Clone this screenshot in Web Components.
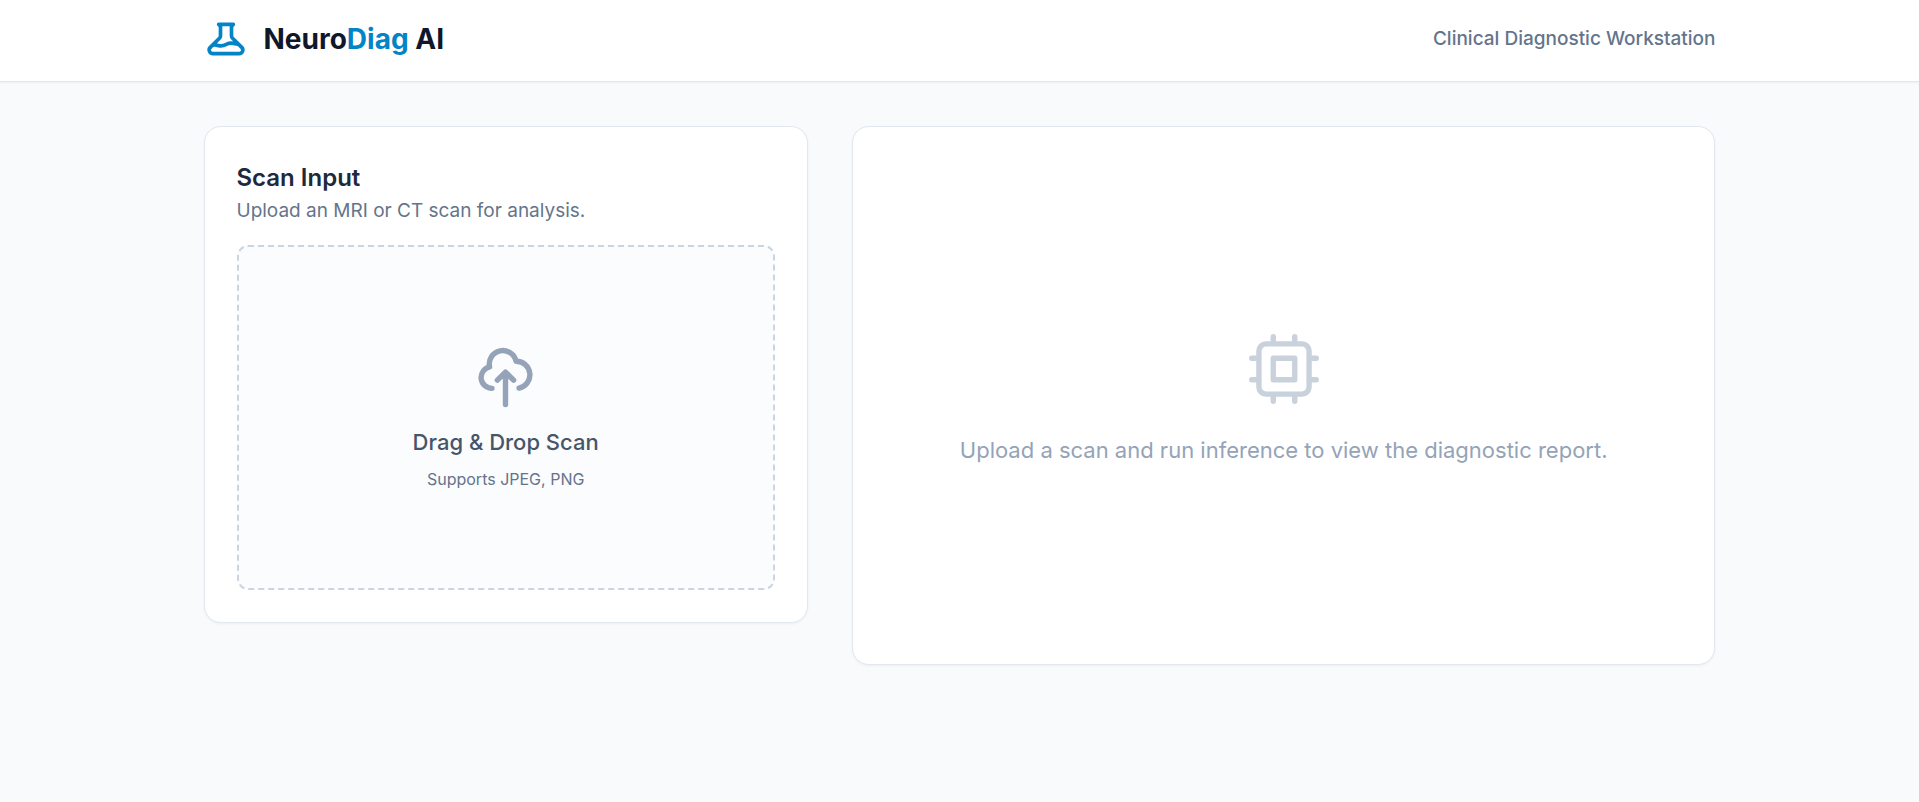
<!DOCTYPE html>
<html lang="en">
<head>
<meta charset="utf-8">
<meta name="viewport" content="width=device-width, initial-scale=1">
<title>NeuroDiag AI</title>
<style>
  :root {
    --brand: #0284c7;
    --slate-50: #f8fafc;
    --slate-200: #e2e8f0;
    --slate-300: #cbd5e1;
    --slate-400: #94a3b8;
    --slate-500: #64748b;
    --slate-600: #475569;
    --slate-800: #1e293b;
    --slate-900: #0f172a;
    --page-width: 1600px;
    --gutter: 44px;
  }
  body {
    margin: 0;
    min-height: 100vh;
    background: var(--slate-50);
    color: var(--slate-800);
    font-family: Inter, "Liberation Sans", sans-serif;
  }
</style>
</head>
<body>
<app-header>
  Neuro<span>Diag</span> AI
  <span slot="tagline">Clinical Diagnostic Workstation</span>
</app-header>
<app-workspace>
  <panel-card>
    <h2 slot="title">Scan Input</h2>
    <p slot="subtitle">Upload an MRI or CT scan for analysis.</p>
    <scan-dropzone>
      Drag &amp; Drop Scan
      <span slot="hint">Supports JPEG, PNG</span>
    </scan-dropzone>
  </panel-card>
  <panel-card>
    <empty-report>Upload a scan and run inference to view the diagnostic report.</empty-report>
  </panel-card>
</app-workspace>

<script>
const icons = {
  beaker: "M19.428 15.428a2 2 0 00-1.022-.547l-2.387-.477a6 6 0 00-3.86.517l-.318.158a6 6 0 01-3.86.517L6.05 15.21a2 2 0 00-1.806.547M8 4h8l-1 1v5.172a2 2 0 00.586 1.414l5 5c1.26 1.26.367 3.414-1.415 3.414H4.828c-1.782 0-2.674-2.154-1.414-3.414l5-5A2 2 0 009 10.172V5L8 4z",
  upload: "M7 16a4 4 0 01-.88-7.903A5 5 0 1115.9 6L16 6a5 5 0 011 9.9M15 13l-3-3m0 0l-3 3m3-3v12",
  chip: "M9 3v2m6-2v2M9 19v2m6-2v2M5 9H3m2 6H3m18-6h-2m2 6h-2M7 19h10a2 2 0 002-2V7a2 2 0 00-2-2H7a2 2 0 00-2 2v10a2 2 0 002 2zM9 9h6v6H9V9z"
}

class LineIcon extends HTMLElement {
  constructor() {
    super();
    this.attachShadow({ mode: 'open' });
  }

  connectedCallback() {
    const stroke = this.getAttribute("stroke") || 2
    this.shadowRoot.innerHTML = `
      <style>
        :host { display: block; flex: none; }
        svg { display: block; width: 100%; height: 100%; }
      </style>
      <svg viewBox="0 0 24 24" fill="none" stroke="currentColor" stroke-width="${stroke}" stroke-linecap="round" stroke-linejoin="round" aria-hidden="true"><path d="${icons[this.getAttribute("name")]}"/></svg>
    `;
  }
}
customElements.define("line-icon", LineIcon);

class AppHeader extends HTMLElement {
  constructor() {
    super();
    this.attachShadow({ mode: 'open' }).innerHTML = `
      <style>
        :host {
          display: block;
          position: relative;
          background: white;
          border-bottom: 1px solid var(--slate-200);
          box-shadow: 0 1px 2px rgba(0, 0, 0, 0.05);
        }
        header {
          box-sizing: border-box;
          max-width: var(--page-width);
          margin: 0 auto;
          padding: 17px var(--gutter) 20px;
          display: flex;
          align-items: center;
          justify-content: space-between;
          gap: 16px;
        }
        .brand {
          display: flex;
          align-items: center;
          gap: 16px;
        }
        line-icon {
          width: 44px;
          height: 44px;
          color: var(--brand);
        }
        h1 {
          margin: 0;
          color: var(--slate-900);
          font-size: 28px;
          font-weight: 700;
          line-height: 40px;
        }
        ::slotted(span:not([slot])) { color: var(--brand); }
        .tagline {
          color: var(--slate-500);
          font-size: 19px;
          font-weight: 500;
          line-height: 28px;
        }
      </style>
      <header>
        <div class="brand">
          <line-icon name="beaker"></line-icon>
          <h1><slot></slot></h1>
        </div>
        <div class="tagline"><slot name="tagline"></slot></div>
      </header>
    `;
  }
}
customElements.define("app-header", AppHeader);

class AppWorkspace extends HTMLElement {
  constructor() {
    super();
    this.attachShadow({ mode: 'open' }).innerHTML = `
      <style>
        :host { display: block; }
        main {
          box-sizing: border-box;
          max-width: var(--page-width);
          margin: 0 auto;
          padding: var(--gutter);
          display: grid;
          grid-template-columns: repeat(12, minmax(0, 1fr));
          gap: var(--gutter);
          align-items: start;
        }
        ::slotted(:first-child) { grid-column: span 5; }
        ::slotted(:last-child) { grid-column: span 7; }
        @media (max-width: 1000px) {
          ::slotted(:first-child), ::slotted(:last-child) { grid-column: 1 / -1; }
        }
      </style>
      <main><slot></slot></main>
    `;
  }
}
customElements.define("app-workspace", AppWorkspace);

class PanelCard extends HTMLElement {
  constructor() {
    super();
    this.attachShadow({ mode: 'open' }).innerHTML = `
      <style>
        :host {
          display: block;
          box-sizing: border-box;
          padding: 32px;
          background: white;
          border: 1px solid var(--slate-200);
          border-radius: 17px;
          box-shadow: 0 1px 3px rgba(0, 0, 0, 0.05);
        }
        ::slotted(h2) {
          margin: 0 0 2px;
          color: var(--slate-800);
          font-size: 24px;
          font-weight: 600;
          line-height: 37px;
        }
        ::slotted(p) {
          margin: 0 0 21px;
          color: var(--slate-500);
          font-size: 19px;
          line-height: 26px;
        }
      </style>
      <slot name="title"></slot>
      <slot name="subtitle"></slot>
      <slot></slot>
    `;
  }
}
customElements.define("panel-card", PanelCard);

class ScanDropzone extends HTMLElement {
  constructor() {
    super();
    this.attachShadow({ mode: 'open' }).innerHTML = `
      <style>
        :host { display: block; }
        label {
          box-sizing: border-box;
          min-height: 345px;
          display: flex;
          flex-direction: column;
          align-items: center;
          justify-content: center;
          border: 2px dashed var(--slate-300);
          border-radius: 11px;
          background: #fbfcfe;
          text-align: center;
          cursor: pointer;
        }
        label:focus-within, label.over { border-color: var(--brand); }
        input {
          position: absolute;
          width: 1px;
          height: 1px;
          opacity: 0;
          pointer-events: none;
        }
        line-icon {
          width: 65px;
          height: 65px;
          margin-bottom: 16px;
          color: var(--slate-400);
        }
        .title {
          margin-bottom: 8px;
          color: var(--slate-600);
          font-size: 22px;
          font-weight: 500;
          line-height: 33px;
        }
        .hint {
          color: var(--slate-500);
          font-size: 16px;
          line-height: 24px;
        }
      </style>
      <label>
        <input type="file" accept="image/jpeg,image/png">
        <line-icon name="upload"></line-icon>
        <span class="title"><slot></slot></span>
        <span class="hint"><slot name="hint"></slot></span>
      </label>
    `;

    const label = this.shadowRoot.querySelector("label")
    label.addEventListener("dragover", (e) => {
      e.preventDefault()
      label.classList.add("over")
    })
    label.addEventListener("dragleave", () => label.classList.remove("over"))
    label.addEventListener("drop", (e) => {
      e.preventDefault()
      label.classList.remove("over")
      this.shadowRoot.querySelector("input").files = e.dataTransfer.files
    })
  }
}
customElements.define("scan-dropzone", ScanDropzone);

class EmptyReport extends HTMLElement {
  constructor() {
    super();
    this.attachShadow({ mode: 'open' }).innerHTML = `
      <style>
        :host {
          min-height: 473px;
          display: flex;
          flex-direction: column;
          align-items: center;
          justify-content: center;
          gap: 22px;
          color: var(--slate-400);
          text-align: center;
        }
        line-icon {
          width: 86px;
          height: 86px;
          color: #c8d1dc;
        }
        p {
          margin: 0;
          font-size: 22px;
          line-height: 32px;
        }
      </style>
      <line-icon name="chip" stroke="1.5"></line-icon>
      <p><slot></slot></p>
    `;
  }
}
customElements.define("empty-report", EmptyReport);
</script>
</body>
</html>
